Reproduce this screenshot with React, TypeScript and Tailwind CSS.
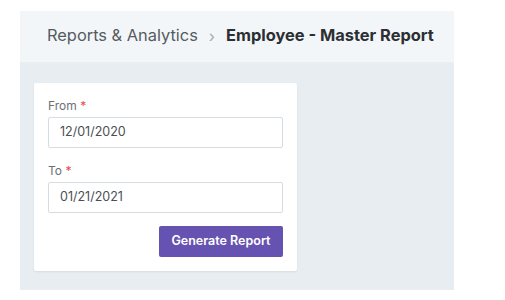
export default function App() {
  return (
    <div className="h-[300px] w-[505px] bg-white pt-[11px] pl-[20px] font-['Inter',sans-serif]">
      <div className="w-[434px]">
        <div className="flex h-[52px] items-center gap-[11px] border-b border-[#e9eef1] bg-[#f3f6f8] pb-[2px] pl-[27px] text-[16.4px]">
          <span className="text-[#555b61]">Reports &amp; Analytics</span>
          <span className="text-[16px] text-[#a3aab0]">›</span>
          <span className="font-bold text-[#2b2f33]">Employee - Master Report</span>
        </div>
        <div className="h-[227px] bg-[#e8edf1] pt-[20px] pl-[14px]">
          <div className="w-[263px] rounded-[2px] bg-white px-[14px] pt-[14px] pb-[14px] shadow-[0_1px_2px_rgba(0,0,0,0.08)]">
            <label className="block text-[12px] leading-[18px] text-[#6b7075]">
              From <span className="text-[#e5484d]">*</span>
            </label>
            <div className="mt-[2px] flex h-[31px] items-center rounded-[2px] border border-[#d6dde2] px-[11px] text-[12.5px] text-[#4a4f54]">
              12/01/2020
            </div>
            <label className="mt-[14px] block text-[12px] leading-[18px] text-[#6b7075]">
              To <span className="text-[#e5484d]">*</span>
            </label>
            <div className="mt-[2px] flex h-[31px] items-center rounded-[2px] border border-[#d6dde2] px-[11px] text-[12.5px] text-[#4a4f54]">
              01/21/2021
            </div>
            <div className="mt-[13px] flex justify-end">
              <button
                type="button"
                className="h-[31px] w-[124px] rounded-[2px] bg-[#6652b0] text-[12.5px] font-semibold text-white"
              >
                Generate Report
              </button>
            </div>
          </div>
        </div>
      </div>
    </div>
  );
}
